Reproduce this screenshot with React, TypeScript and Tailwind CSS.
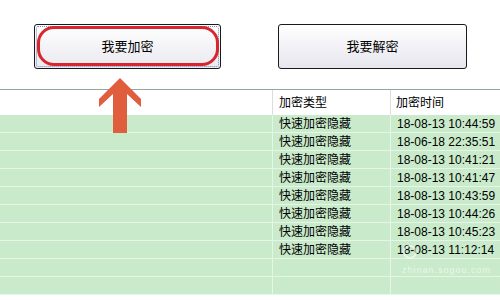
const rows = [
  '18-08-13 10:44:59',
  '18-06-18 22:35:51',
  '18-08-13 10:41:21',
  '18-08-13 10:41:47',
  '18-08-13 10:43:59',
  '18-08-13 10:44:26',
  '18-08-13 10:45:23',
  '18-08-13 11:12:14',
  '',
  '',
];

const font = { fontFamily: '"Liberation Sans", "Noto Sans CJK SC", sans-serif' };

export default function App() {
  return (
    <div className="relative w-[500px] h-[300px] overflow-hidden bg-white text-black" style={font}>
      {/* buttons */}
      <div className="flex h-[89px] pt-[24px] pl-[34px]">
        <div className="relative h-[45px] w-[187px] rounded-[3px] border border-[#1a1a1a] bg-gradient-to-b from-white to-[#e9e9ef] p-px">
          <div className="h-full w-full rounded-[2px] border border-dotted border-[#6f8fb8] flex items-center justify-center text-[13px]">
            我要加密
          </div>
          <div className="absolute left-[2px] right-[1px] top-[1px] bottom-[2px] rounded-[17px] border-[3px] border-[#d9252f]" />
        </div>
        <div className="ml-[57px] h-[45px] w-[189px] rounded-[3px] border border-[#1a1a1a] bg-gradient-to-b from-white to-[#e6e6ee] flex items-center justify-center text-[13px]">
          我要解密
        </div>
      </div>

      {/* table */}
      <div className="border-t border-[#8fa9a2]">
        <div className="flex h-[25px] bg-white text-[12px]">
          <div className="w-[273px] border-r border-[#dcdcdc]" />
          <div className="w-[118px] border-r border-[#dcdcdc] pl-[6px] pt-[5px] leading-[16px]">加密类型</div>
          <div className="flex-1 pl-[5px] pt-[5px] leading-[16px]">加密时间</div>
        </div>
        {rows.map((t, i) => (
          <div key={i} className="flex h-[18px] bg-[#c9ebcb] border-b border-[#e6f6e6] text-[12px] leading-[15px]">
            <div className="w-[273px] border-r border-[#e6f6e6]" />
            <div className="w-[118px] border-r border-[#e6f6e6] pl-[6px] pt-[2px]">{t ? '快速加密隐藏' : ''}</div>
            <div className="flex-1 pl-[6px] pt-[2px] whitespace-nowrap">{t}</div>
          </div>
        ))}
      </div>

      {/* annotation arrow + watermark logo */}
      <svg className="absolute left-0 top-0" width="500" height="300">
        <polygon
          points="120,78 141,99 141,107 127,94 127,133 113,133 113,94 99,107 99,99"
          fill="#e05d3e"
        />
        <circle cx="410" cy="252" r="6" fill="none" stroke="#ffffff" strokeOpacity="0.55" strokeWidth="2" />
      </svg>

      {/* watermark */}
      <div className="absolute left-[402px] top-[264px] text-[9px] tracking-[1px] text-white/60">zhinan.sogou.com</div>
    </div>
  );
}
